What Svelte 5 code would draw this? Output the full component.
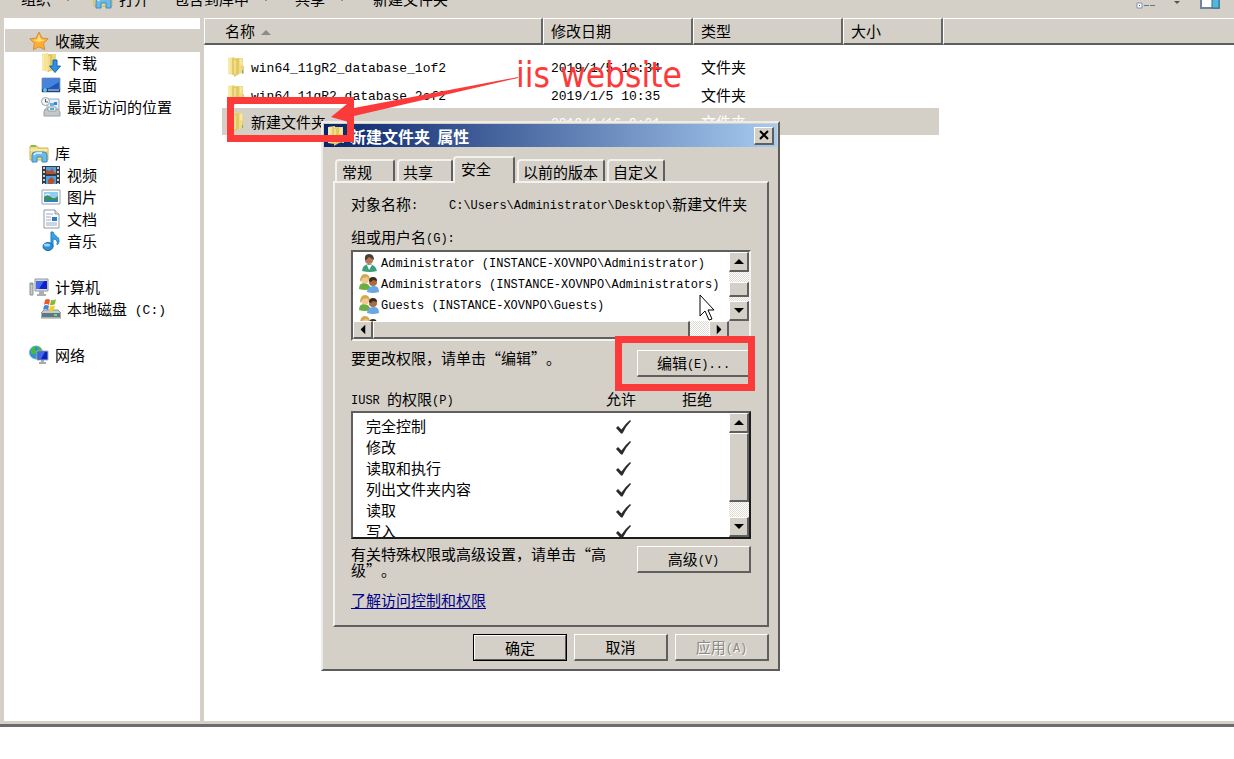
<!--
File explorer window with the folder properties dialog open on its
security tab, plus the red annotation layer.
-->

<script lang="ts">
  interface Place {
    icon: string
    label: string
  }

  interface PlaceGroup extends Place {
    selected?: boolean
    children: Place[]
  }

  const places: PlaceGroup[] = [
    {
      icon: 'star',
      label: '收藏夹',
      selected: true,
      children: [
        { icon: 'download', label: '下载' },
        { icon: 'desktop', label: '桌面' },
        { icon: 'recent', label: '最近访问的位置' },
      ],
    },
    {
      icon: 'library',
      label: '库',
      children: [
        { icon: 'video', label: '视频' },
        { icon: 'picture', label: '图片' },
        { icon: 'document', label: '文档' },
        { icon: 'music', label: '音乐' },
      ],
    },
    {
      icon: 'computer',
      label: '计算机',
      children: [{ icon: 'disk', label: '本地磁盘 (C:)' }],
    },
    { icon: 'network', label: '网络', children: [] },
  ]

  const files = [
    { name: 'win64_11gR2_database_1of2', date: '2019/1/5 10:34', type: '文件夹' },
    { name: 'win64_11gR2_database_2of2', date: '2019/1/5 10:35', type: '文件夹' },
    { name: '新建文件夹', date: '2019/1/16 9:01', type: '文件夹' },
  ]

  const tabs = ['常规', '共享', '安全', '以前的版本', '自定义']

  const users = [
    { icon: 'user', name: 'Administrator (INSTANCE-XOVNPO\\Administrator)' },
    { icon: 'users', name: 'Administrators (INSTANCE-XOVNPO\\Administrators)' },
    { icon: 'users', name: 'Guests (INSTANCE-XOVNPO\\Guests)' },
    { icon: 'users', name: 'IIS_IUSRS (INSTANCE-XOVNPO\\IIS_IUSRS)' },
  ]

  const permissions = ['完全控制', '修改', '读取和执行', '列出文件夹内容', '读取', '写入']

  let activeTab = $state('安全')
  let selectedFile = $state('新建文件夹')

  // Latin runs are set in a narrower monospace than the Chinese text
  function splitRuns(text: string): string[] {
    return text.match(/[\x20-\x7e]+|[^\x20-\x7e]+/g) ?? []
  }

  function isLatin(run: string): boolean {
    return /^[\x20-\x7e]/.test(run)
  }
</script>

{#snippet mixed(text: string)}{#each splitRuns(text) as run}{#if isLatin(run)}<span class="latin">{run}</span>{:else}{run}{/if}{/each}{/snippet}

{#snippet icon(name: string)}
  <svg class="icon" viewBox="0 0 20 20" aria-hidden="true">
    {#if name === 'star'}
      <path d="M10 1l2.8 6 6.4.8-4.7 4.5 1.2 6.5L10 15.7l-5.7 3.1 1.2-6.5L.8 7.8 7.2 7z" fill="#fdb030" stroke="#d98a3c" />
      <path d="M10 3.5l2 5 4.5.5-6.5 2-6-2 4.200-.5z" fill="#ffe27a" />
    {:else if name === 'folder'}
      <path d="M1 1l7-1v18l-7-1z" fill="#f5e493" />
      <path d="M8 1h8v15l-8 2z" fill="#f0dc84" />
      <path d="M7 2l5-1v16l-5 3z" fill="#e3c961" />
      <path d="M2 2v14M8 3v14M14 2v6" stroke="#fdf3c0" fill="none" />
      <path d="M6 1v17" stroke="#cfb04a" fill="none" />
      <path d="M15 9h2v8h-2z" fill="#e6d07a" />
      <path d="M15 13h1v3h-1z" fill="#4fb0dc" />
    {:else if name === 'download'}
      <path d="M1 1l6-1v19l-6-2z" fill="#f5e493" />
      <path d="M7 1h8v16l-8 2z" fill="#ecd57a" />
      <path d="M7 2l4-1v15l-4 3z" fill="#e0c45c" />
      <path d="M2 2v14M8 3v14" stroke="#fdf3c0" fill="none" />
      <path d="M12 7h4v6h3.500l-5.500 6.500L8.500 13H12z" fill="#2f8fe0" stroke="#1768b3" />
    {:else if name === 'desktop'}
      <path d="M1 3h18v14H1z" fill="#1d57b8" stroke="#8fa9c4" />
      <path d="M2 4h16v3L8 13H2z" fill="#4584dc" />
      <path d="M1 14h18v3H1z" fill="#21457c" />
      <circle cx="4" cy="15" r="2" fill="#69c0e8" /><path d="M7 15h11" stroke="#dbe9f5" />
    {:else if name === 'recent'}
      <path d="M6 2h12v11H6z" fill="#e6f1fa" stroke="#9aa9b5" />
      <path d="M9 6h4v3H9z" fill="#5fb0e8" /><path d="M13 5h3v3h-3z" fill="#3c82d6" />
      <path d="M4 12h13l2 3v4H3v-4z" fill="#c4c8cb" stroke="#9aa0a5" />
      <path d="M7 10h8v4H7z" fill="#eef6fc" stroke="#9aa0a5" />
      <path d="M9 11h4v2H9z" fill="#4cb3cf" />
      <circle cx="4.500" cy="4.500" r="4" fill="#f2f5f7" stroke="#9aa5ad" />
      <path d="M4.500 2V5H7" stroke="#4b5a66" fill="none" />
    {:else if name === 'library'}
      <path d="M1 3h7l1 2h10v12H1z" fill="#f3dc83" stroke="#d2b552" />
      <path d="M2 3h5" stroke="#7cc04c" stroke-width="2" />
      <path d="M1 7h18" stroke="#fff4bf" />
      <path d="M3 19v-7q0-3 3-3h9q3 0 3 3v7h-5v-5H8v5z" fill="#6cb9e6" stroke="#3b8cc2" />
      <path d="M5 12q1-2 3-2h5" stroke="#c9ebfb" stroke-width="2" fill="none" />
    {:else if name === 'video'}
      <path d="M1 1h18v18H1z" fill="#363b40" />
      <path d="M5 2h10v7H5zM5 11h10v8H5z" fill="#4aa4df" />
      <path d="M5 5l4 1 2-3 2 4 2 1v1H5zM7 15l3-3 4 3-2 4H7z" fill="#b64f37" />
      <path d="M3 2v17M17 2v17" stroke="#c9d2d7" stroke-width="2" stroke-dasharray="2 2" />
    {:else if name === 'picture'}
      <path d="M1 3h18v14H1z" fill="#fff" stroke="#95a3ad" />
      <path d="M3 5h14v10H3z" fill="#8fcdf2" />
      <path d="M3 10q4-3 7 0t7-1v6H3z" fill="#3d8c62" /><path d="M3 13h14v2H3z" fill="#2b83bb" />
      <path d="M4 8q3-2 5 0" stroke="#fff" fill="none" />
    {:else if name === 'document'}
      <path d="M3 1h11l4 4v14H3z" fill="#fff" stroke="#8b9aa5" />
      <path d="M14 1v4h4" fill="#dce4ea" stroke="#8b9aa5" />
      <path d="M5 5h7M5 8h5M5 11h5M5 14h11M5 16h11" stroke="#98aac2" />
      <path d="M11 8h5v4h-5z" fill="#2c7cc4" />
    {:else if name === 'music'}
      <path d="M10 1h2c1 4 6 4 6 9 0 2-1 3-2 4 1-4-1-6-4-6v8h-2z" fill="#3ba0e4" stroke="#2280c4" />
      <ellipse cx="7" cy="15.500" rx="5" ry="4" fill="#2f8fd6" stroke="#1b6dab" />
      <ellipse cx="6" cy="14" rx="3" ry="1.500" fill="#9bd5f7" />
    {:else if name === 'computer'}
      <path d="M1 6h3v12H1z" fill="#c3c9cd" stroke="#8b9398" /><path d="M1 7h3" stroke="#63b84a" />
      <path d="M6 2h13v12H6z" fill="#d6dbde" stroke="#92999e" />
      <path d="M7 4h11v8H7z" fill="#0e22c8" /><path d="M7 4h8l-5 8H7z" fill="#4167ee" />
      <path d="M10 14h5v3h2v2H8v-2h2z" fill="#a8aeb2" />
    {:else if name === 'disk'}
      <path d="M3 11h14l3 3v5H0v-5z" fill="#c5ccd0" stroke="#8b9499" />
      <path d="M1 14h18v4H1z" fill="#5f7880" /><path d="M13 15h3v2h-3z" fill="#62e07c" />
      <path d="M4 1q3-2 5 0L8 6Q5 4 3 6z" fill="#ec5a2c" /><path d="M10 1q3 1 5-1l-1 5q-3 2-5 1z" fill="#7dbb38" />
      <path d="M3 7q2-2 5 0l-1 4q-3-2-5 0z" fill="#3c86dc" /><path d="M9 7q3 1 5-1l-1 5q-3 2-5 1z" fill="#f9c928" />
    {:else if name === 'network'}
      <circle cx="7" cy="7.500" r="6.500" fill="#2e8de0" stroke="#6aaedb" />
      <path d="M2 4q3-3 5-3L6 5l2 2-3 3-3-2zM8 1q4 1 5 5L9 5zM6 10l3 3-2 1z" fill="#47b93b" />
      <path d="M8 6h11v9H8z" fill="#0d22ba" stroke="#a9b5be" /><path d="M9 7h7l-4 7H9z" fill="#4066e8" />
      <path d="M12 15h3v2h2v2h-7v-2h2z" fill="#a2abb1" />
    {:else if name === 'user'}
      <path d="M3 18q0-6 7-7 7 1 8 7-7 2-15 0z" fill="#3f9f7c" />
      <path d="M8 12l2 5 3-5z" fill="#fff" />
      <circle cx="10" cy="7" r="4" fill="#b57852" /><path d="M6 7q-1-6 4-6t5 6l-5-3-3 3z" fill="#4a3d33" />
    {:else if name === 'users'}
      <path d="M0 15q0-6 5-6t7 6q-6 2-12 0z" fill="#6cae42" />
      <circle cx="6" cy="5.500" r="4" fill="#f1c894" /><path d="M1 8q0-8 5-8t5 7L8 3 4 4z" fill="#d3a94c" />
      <path d="M8 18q0-5 6-6t6 6q-6 2-12 0z" fill="#6aa6e2" />
      <circle cx="14" cy="8" r="4" fill="#a96a45" /><path d="M10 7q0-4 4-4t4 4l-4-1-2 2z" fill="#3b2c22" />
    {/if}
  </svg>
{/snippet}

{#snippet arrow(direction: string)}
  <svg class="arrow {direction}" viewBox="0 0 10 5" aria-hidden="true">
    <path d="M0 5L5 0l5 5z" fill="currentColor" />
  </svg>
{/snippet}

<main class="screen" lang="zh-CN">
  <section class="explorer">
    <div class="toolbar">
      <button class="tool organize">组织 <i class="caret"></i></button>
      <button class="tool open">{@render icon('library')}打开</button>
      <button class="tool include">包含到库中 <i class="caret"></i></button>
      <button class="tool share">共享 <i class="caret"></i></button>
      <button class="tool create">新建文件夹</button>
      <div class="view-tools">
        <button class="tool view" aria-label="视图">
          <svg width="20" height="16" viewBox="0 0 20 16">
            <path d="M1 1h5v4H1zM1 9h5v5H1z" fill="#fff" stroke="#8291aa" />
            <path d="M3 11h1v1H3z" fill="#2c50a0" />
            <path d="M8 3h5M14 3h5M8 11.500h5M14 11.500h5" stroke="#62748f" />
          </svg>
          <i class="caret"></i>
        </button>
        <button class="tool" aria-label="预览窗格">
          <svg width="20" height="16" viewBox="0 0 20 16">
            <path d="M1 1h18v13H1z" fill="#fff" stroke="#7084a0" stroke-width="2" />
            <path d="M12 1h7v13h-7z" fill="#54b7d9" stroke="#2f7396" />
          </svg>
        </button>
      </div>
    </div>

    <div class="content">
      <nav class="sidebar">
        {#each places as group}
          <div class="group">
            <a class="place head" class:selected={group.selected} href="#top">
              {@render icon(group.icon)}<span>{group.label}</span>
            </a>
            {#each group.children as place}
              <a class="place" href="#top">
                {@render icon(place.icon)}<span>{@render mixed(place.label)}</span>
              </a>
            {/each}
          </div>
        {/each}
      </nav>

      <div class="files">
        <table class="file-table">
          <colgroup>
            <col class="col-name" /><col class="col-date" /><col class="col-date" /><col class="col-size" /><col />
          </colgroup>
          <thead>
            <tr>
              <th>名称 <i class="sort"></i></th>
              <th>修改日期</th>
              <th>类型</th>
              <th>大小</th>
              <th aria-label="空"></th>
            </tr>
          </thead>
          <tbody>
            {#each files as file}
              <tr class:selected={file.name === selectedFile} onclick={() => (selectedFile = file.name)}>
                <td><span class="name">{@render icon('folder')}<span>{@render mixed(file.name)}</span></span></td>
                <td>{@render mixed(file.date)}</td>
                <td>{file.type}</td>
                <td></td>
                <td></td>
              </tr>
            {/each}
          </tbody>
        </table>
      </div>
    </div>
  </section>

  <div class="dialog" role="dialog" aria-labelledby="dialog-title">
    <header class="titlebar">
      {@render icon('folder')}
      <h1 id="dialog-title">{@render mixed('新建文件夹 属性')}</h1>
      <button class="close" aria-label="关闭">
        <svg width="10" height="10" viewBox="0 0 10 10">
          <path d="M1 1l8 8M9 1L1 9" stroke="#000" stroke-width="2" />
        </svg>
      </button>
    </header>

    <div class="tabs" role="tablist">
      {#each tabs as tab}
        <button
          class="tab"
          class:active={tab === activeTab}
          role="tab"
          aria-selected={tab === activeTab}
          onclick={() => (activeTab = tab)}>{tab}</button>
      {/each}
    </div>

    <div class="panel">
      <div class="object">
        <span class="object-label">{@render mixed('对象名称:')}</span>
        <span class="object-path">{@render mixed('C:\\Users\\Administrator\\Desktop\\新建文件夹')}</span>
      </div>

      <div class="caption" id="users-label">{@render mixed('组或用户名(G):')}</div>
      <div class="user-box">
        <ul class="users" aria-labelledby="users-label">
          {#each users as user}
            <li>{@render icon(user.icon)}<span>{@render mixed(user.name)}</span></li>
          {/each}
        </ul>
        <div class="scroll vertical">
          <button aria-label="向上">{@render arrow('up')}</button>
          <div class="thumb small"></div>
          <button aria-label="向下">{@render arrow('down')}</button>
        </div>
        <div class="scroll horizontal">
          <button aria-label="向左">{@render arrow('left')}</button>
          <div class="thumb"></div>
          <div class="gap"></div>
          <button aria-label="向右">{@render arrow('right')}</button>
        </div>
        <div class="corner"></div>
      </div>

      <div class="action edit">
        <p>要更改权限，请单击“编辑”。</p>
        <button class="btn">{@render mixed('编辑(E)...')}</button>
      </div>

      <div class="perm-head">
        <span>{@render mixed('IUSR 的权限(P)')}</span>
        <span class="center">允许</span>
        <span class="center">拒绝</span>
      </div>
      <div class="perm-box">
        <div class="perm-view">
          <table class="perms">
            <tbody>
              {#each permissions as permission}
                <tr>
                  <th scope="row">{permission}</th>
                  <td>
                    <svg width="16" height="14" viewBox="0 0 16 14" role="img" aria-label="允许">
                      <path d="M0 8l2-2 3.500 3.500Q9 4 14 0l1 1Q10 6 6.500 13.500H5z" fill="#2b2b2b" />
                    </svg>
                  </td>
                  <td></td>
                </tr>
              {/each}
            </tbody>
          </table>
        </div>
        <div class="scroll vertical">
          <button aria-label="向上">{@render arrow('up')}</button>
          <div class="thumb large"></div>
          <button aria-label="向下">{@render arrow('down')}</button>
        </div>
      </div>

      <div class="action advanced">
        <p>有关特殊权限或高级设置，请单击“高级”。</p>
        <button class="btn">{@render mixed('高级(V)')}</button>
      </div>

      <a class="learn" href="#top">了解访问控制和权限</a>
    </div>

    <footer class="buttons">
      <button class="btn default">确定</button>
      <button class="btn">取消</button>
      <button class="btn" disabled>{@render mixed('应用(A)')}</button>
    </footer>
  </div>

  <svg class="pointer" width="16" height="28" viewBox="0 0 16 28" aria-hidden="true">
    <path d="M1 1v21l5-5 4 9 3-1-4-9h6z" fill="#fff" stroke="#000" />
  </svg>

  <div class="mark file-mark"></div>
  <div class="mark edit-mark"></div>
  <svg class="mark-arrow" width="190" height="50" viewBox="0 0 190 50" aria-hidden="true">
    <path d="M188 2L24 33l-7-4L1 42l21 6 2-7L188 3z" fill="#fc3a3a" />
  </svg>
  <div class="mark-text">iis website</div>
</main>

<style>
  :global(body) {
    background: #fff;
  }

  .screen {
    --face: #d4d0c8;
    --red: #fc3a3a;
    position: relative;
    min-height: 100vh;
    overflow: hidden;
    color: #000;
    font: 15px/22px 'Noto Sans CJK SC', sans-serif;
    text-spacing-trim: space-all;
  }

  .screen * {
    box-sizing: border-box;
  }

  button {
    padding: 0;
    border: 0;
    background: var(--face);
    color: inherit;
    font: inherit;
  }

  .latin {
    font-family: 'Liberation Mono', monospace;
    font-size: 12px;
    line-height: 1;
    vertical-align: 1px;
    white-space: pre;
  }

  .icon {
    flex: none;
    width: 20px;
    height: 20px;
  }

  /* explorer */
  .explorer {
    display: flex;
    flex-direction: column;
    height: calc(100vh - 32px);
    border-bottom: 3px solid #6b6b6b;
    background: var(--face);
  }

  .explorer .latin {
    font-size: 13px;
  }

  .toolbar {
    display: flex;
    flex: none;
    align-items: flex-end;
    height: 18px;
    padding: 0 14px 8px 21px;
  }

  .tool {
    display: flex;
    align-items: center;
    gap: 6px;
    white-space: nowrap;
  }

  .organize,
  .include,
  .share {
    gap: 14px;
  }

  .organize {
    margin-right: 22px;
  }

  .include {
    margin: 0 26px 0 25px;
  }

  .share {
    margin-right: 28px;
  }

  .caret {
    border: 3px solid transparent;
    border-top-color: #555;
    border-bottom: 0;
  }

  .view-tools {
    display: flex;
    gap: 20px;
    margin-left: auto;
  }

  .view {
    gap: 18px;
  }

  .content {
    display: flex;
    flex: 1;
    min-height: 0;
    margin-bottom: 3px;
    padding-left: 4px;
  }

  .sidebar {
    flex: none;
    width: 196px;
    padding-top: 11px;
    background: #fff;
  }

  .group {
    margin-bottom: 23px;
  }

  .place {
    display: flex;
    align-items: center;
    gap: 6px;
    height: 22px;
    margin-left: 1px;
    padding-left: 36px;
    color: #000;
    text-decoration: none;
  }

  .place.head {
    height: 23px;
    padding-left: 24px;
  }

  .place.selected {
    background: var(--face);
  }

  .files {
    flex: 1;
    min-width: 0;
    margin-left: 4px;
    background: #fff;
  }

  .file-table {
    width: 100%;
    border-collapse: separate;
    border-spacing: 0;
    table-layout: fixed;
  }

  .col-name {
    width: 339px;
  }

  .col-date {
    width: 150px;
  }

  .col-size {
    width: 100px;
  }

  .file-table th {
    height: 27px;
    padding: 0 0 0 7px;
    border: solid;
    border-width: 1px 2px 2px 1px;
    border-color: #fff #666 #5a5f5a #fff;
    background: var(--face);
    font-weight: normal;
    text-align: left;
  }

  .file-table th:first-child {
    padding-left: 20px;
  }

  .file-table th:last-child {
    border-right: 0;
  }

  .sort {
    display: inline-block;
    margin-left: 3px;
    border: 5px solid transparent;
    border-top: 0;
    border-bottom-color: #8a8a8a;
    vertical-align: middle;
  }

  .file-table td {
    height: 27px;
    padding: 0 0 0 8px;
  }

  .file-table tbody tr:first-child td {
    height: 36px;
    padding-top: 8px;
  }

  .name {
    display: flex;
    align-items: center;
    gap: 4px;
    padding-left: 15px;
  }

  tr.selected td {
    background: var(--face);
    color: #fff;
  }

  tr.selected td:first-child {
    background: linear-gradient(to right, #fff 18px, var(--face) 18px);
    color: #000;
  }

  tr.selected td:nth-child(4) {
    background: linear-gradient(to left, #fff 4px, var(--face) 4px);
  }

  tr.selected td:last-child {
    background: #fff;
  }

  /* properties dialog */
  .dialog {
    position: absolute;
    top: 121px;
    left: 321px;
    width: 459px;
    padding: 1px 1px 8px;
    border: 2px solid #fff;
    border-color: #eeece8 #5c5c5c #5c5c5c #eeece8;
    background: var(--face);
  }

  .titlebar {
    display: flex;
    align-items: center;
    height: 23px;
    padding: 0 3px;
    background: linear-gradient(to right, #0a246a, #a6caf0);
  }

  .titlebar h1 {
    flex: 1;
    margin: 0 0 0 3px;
    color: #fff;
    font-size: 16px;
  }

  .close {
    display: flex;
    align-items: center;
    justify-content: center;
    width: 20px;
    height: 18px;
  }

  .close,
  .btn,
  .scroll button,
  .thumb {
    border: solid;
    border-width: 1px 2px 2px 1px;
    border-color: #fff #5f5f5f #5f5f5f #fff;
    background: var(--face);
  }

  .tabs {
    display: flex;
    align-items: flex-end;
    gap: 2px;
    height: 34px;
    padding-left: 11px;
  }

  .tab {
    height: 22px;
    padding: 0 6px;
    border: solid;
    border-width: 2px 2px 0;
    border-color: #f4f2ee #5f5f5f #fff #f4f2ee;
    border-radius: 4px 3px 0 0;
  }

  .tab:first-child {
    padding: 0 21px 0 5px;
  }

  .tab:nth-child(2) {
    padding: 0 18px 0 4px;
  }

  .tab:nth-child(4),
  .tab:nth-child(5) {
    padding: 0 5px 0 4px;
  }

  .tab.active {
    z-index: 1;
    height: 27px;
    margin: 0 0 -2px -2px;
    padding: 0 22px 3px 6px;
    background: var(--face);
  }

  .panel {
    margin: 0 8px 0 9px;
    padding: 10px 16px 14px;
    border: 2px solid;
    border-color: #f4f2ee #5f5f5f #5f5f5f #f4f2ee;
  }

  .object {
    display: flex;
    white-space: nowrap;
  }

  .object-label {
    flex: none;
    width: 98px;
  }

  .object-path {
    overflow: hidden;
  }

  .caption {
    margin: 11px 0 2px;
  }

  .user-box {
    display: grid;
    grid-template-columns: 1fr 20px;
    grid-template-rows: 69px 18px;
    border: 2px solid;
    border-color: #5f5f5f #f4f2ee #f4f2ee #5f5f5f;
    background: #fff;
  }

  .users {
    margin: 0;
    padding: 0 0 0 6px;
    overflow: hidden;
    font-size: 12px;
    line-height: 16px;
    list-style: none;
    white-space: nowrap;
  }

  .users li {
    display: flex;
    align-items: center;
    gap: 2px;
    height: 21px;
  }

  .scroll {
    display: flex;
    background: repeating-conic-gradient(#fff 0 25%, #dedbd5 0 50%) 0 0 / 2px 2px;
  }

  .scroll button {
    display: flex;
    flex: none;
    align-items: center;
    justify-content: center;
    width: 20px;
    height: 20px;
  }

  .vertical {
    flex-direction: column;
    justify-content: space-between;
  }

  .horizontal button {
    height: 18px;
  }

  .horizontal .thumb {
    flex: 1;
  }

  .gap {
    width: 19px;
  }

  .thumb.small {
    height: 15px;
    margin-top: 6px;
  }

  .thumb.large {
    height: 69px;
    margin-bottom: auto;
  }

  .arrow {
    width: 10px;
    height: 5px;
  }

  .arrow.down {
    transform: rotate(180deg);
  }

  .arrow.left {
    transform: rotate(-90deg);
  }

  .arrow.right {
    transform: rotate(90deg);
  }

  .corner {
    background: var(--face);
  }

  .action {
    display: flex;
    align-items: flex-start;
    justify-content: space-between;
  }

  .action p {
    flex: none;
    width: 270px;
    margin: 0;
    line-height: 16px;
  }

  .edit {
    margin: 9px 0 11px;
  }

  .advanced {
    margin: 7px 0 11px;
  }

  .btn {
    flex: none;
    width: 114px;
    height: 27px;
  }

  .perm-head {
    display: grid;
    grid-template-columns: 1fr 76px 76px;
    margin-bottom: 1px;
    padding-right: 16px;
  }

  .center {
    text-align: center;
  }

  .perm-box {
    display: flex;
    height: 128px;
    border: 2px solid;
    border-color: #5f5f5f #1c1c1c #1c1c1c #5f5f5f;
    background: #fff;
  }

  .perm-view {
    flex: 1;
    padding-top: 2px;
    overflow: hidden;
  }

  .perms {
    width: 100%;
    border-collapse: collapse;
    table-layout: fixed;
    line-height: 21px;
  }

  .perms th {
    padding: 0 0 0 13px;
    font-weight: normal;
    text-align: left;
  }

  .perms td {
    width: 70px;
    height: 21px;
    padding: 0;
    text-align: center;
  }

  .perms svg {
    display: block;
    margin: 3px auto 0;
  }

  .learn {
    display: block;
    width: fit-content;
    color: #00008b;
    text-underline-offset: 2px;
  }

  .buttons {
    display: flex;
    justify-content: flex-end;
    gap: 7px;
    padding: 7px 8px 0 0;
  }

  .buttons .btn {
    width: 94px;
  }

  .btn.default {
    outline: 1px solid #000;
    outline-offset: -1px;
    border: 2px solid;
    border-color: #fff #5f5f5f #5f5f5f #fff;
  }

  .btn:disabled {
    color: #8b8984;
    text-shadow: 1px 1px #fff;
  }

  /* pointer and red annotations */
  .pointer {
    position: absolute;
    top: 294px;
    left: 699px;
  }

  .mark {
    position: absolute;
    border: 7px solid var(--red);
  }

  .file-mark {
    top: 97px;
    left: 227px;
    width: 127px;
    height: 45px;
  }

  .edit-mark {
    top: 336px;
    left: 615px;
    width: 140px;
    height: 55px;
  }

  .mark-arrow {
    position: absolute;
    top: 75px;
    left: 330px;
  }

  .mark-text {
    position: absolute;
    top: 55px;
    left: 516px;
    color: var(--red);
    font: 35px/40px 'DejaVu Sans Condensed', 'DejaVu Sans', sans-serif;
    white-space: nowrap;
  }
</style>
